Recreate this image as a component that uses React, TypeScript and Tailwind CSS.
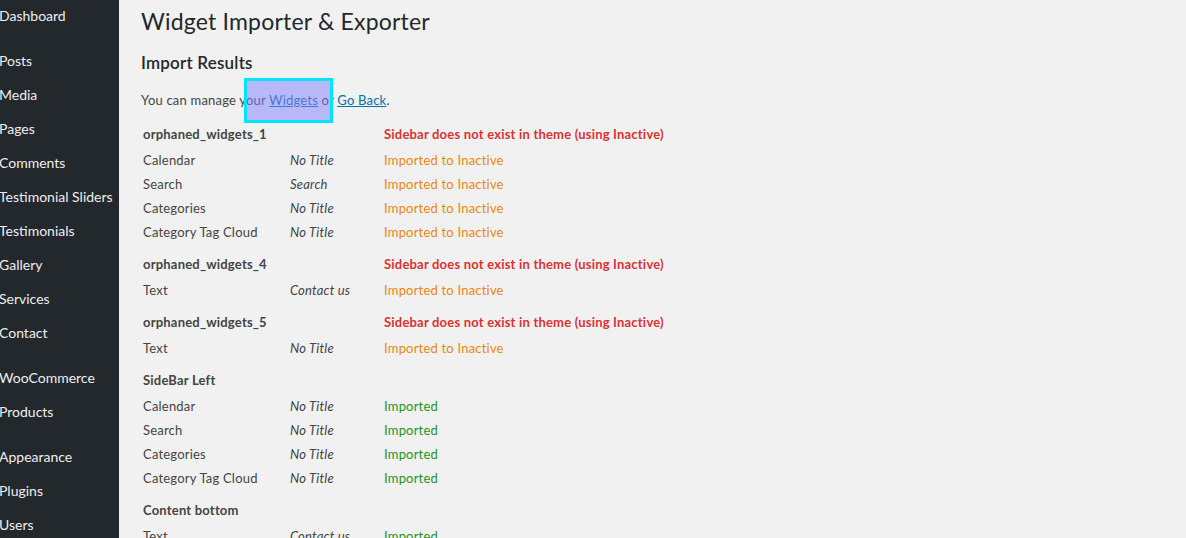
import React from 'react'

type Row = { name: string; title?: string; status: string; kind: 'error' | 'warn' | 'ok' }
type Group = { sidebar: string; message?: string; rows: Row[] }

const menu: (string | null)[] = [
  'Dashboard',
  null,
  'Posts',
  'Media',
  'Pages',
  'Comments',
  'Testimonial Sliders',
  'Testimonials',
  'Gallery',
  'Services',
  'Contact',
  null,
  'WooCommerce',
  'Products',
  null,
  'Appearance',
  'Plugins',
  'Users',
]

const groups: Group[] = [
  {
    sidebar: 'orphaned_widgets_1',
    message: 'Sidebar does not exist in theme (using Inactive)',
    rows: [
      { name: 'Calendar', title: 'No Title', status: 'Imported to Inactive', kind: 'warn' },
      { name: 'Search', title: 'Search', status: 'Imported to Inactive', kind: 'warn' },
      { name: 'Categories', title: 'No Title', status: 'Imported to Inactive', kind: 'warn' },
      { name: 'Category Tag Cloud', title: 'No Title', status: 'Imported to Inactive', kind: 'warn' },
    ],
  },
  {
    sidebar: 'orphaned_widgets_4',
    message: 'Sidebar does not exist in theme (using Inactive)',
    rows: [{ name: 'Text', title: 'Contact us', status: 'Imported to Inactive', kind: 'warn' }],
  },
  {
    sidebar: 'orphaned_widgets_5',
    message: 'Sidebar does not exist in theme (using Inactive)',
    rows: [{ name: 'Text', title: 'No Title', status: 'Imported to Inactive', kind: 'warn' }],
  },
  {
    sidebar: 'SideBar Left',
    rows: [
      { name: 'Calendar', title: 'No Title', status: 'Imported', kind: 'ok' },
      { name: 'Search', title: 'No Title', status: 'Imported', kind: 'ok' },
      { name: 'Categories', title: 'No Title', status: 'Imported', kind: 'ok' },
      { name: 'Category Tag Cloud', title: 'No Title', status: 'Imported', kind: 'ok' },
    ],
  },
  {
    sidebar: 'Content bottom',
    rows: [{ name: 'Text', title: 'Contact us', status: 'Imported', kind: 'ok' }],
  },
]

const statusColor = {
  error: 'text-[#dc3232]',
  warn: 'text-[#f0850f]',
  ok: 'text-[#1f961f]',
}

export default function App() {
  return (
    <div className="flex h-[538px] w-[1186px] overflow-hidden bg-[#f1f1f1] font-['Lato','Noto_Sans',sans-serif]">
      {/* Admin menu */}
      <nav className="w-[119px] shrink-0 bg-[#23282d] text-[14px] text-[#eeeeee]">
        <ul className="-mt-[2px] -ml-px">
          {menu.map((item, i) =>
            item === null ? (
              <li key={i} className="h-[11px]" />
            ) : (
              <li key={i} className="flex h-[34px] items-center whitespace-nowrap">
                {item}
              </li>
            )
          )}
        </ul>
      </nav>

      {/* Content */}
      <main className="relative flex-1 pl-[22px] text-[#444] tracking-[0.2px]">
        <h1 className="pt-[7px] text-[23px] leading-[29px] text-[#23282d]">Widget Importer &amp; Exporter</h1>
        <h2 className="mt-[15px] text-[17px] font-semibold leading-[24px] text-[#23282d]">Import Results</h2>
        <p className="mt-[15px] h-[20px] text-[13px] leading-[20px] text-[#444]">
          You can manage your{' '}
          <a href="#" className="text-[#0073aa] underline">
            Widgets
          </a>{' '}
          or{' '}
          <a href="#" className="text-[#0073aa] underline">
            Go Back
          </a>
          .
        </p>

        <div className="mt-[13px] pl-[2px] text-[13px]">
          {groups.map((g, gi) => (
            <div key={gi} className={gi === 0 ? '' : 'pt-2'}>
              <div className="mb-[2px] flex h-6 items-center font-bold text-[#444]">
                <span className="w-[241px]">{g.sidebar}</span>
                {g.message && <span className={statusColor.error}>{g.message}</span>}
              </div>
              {g.rows.map((r, ri) => (
                <div key={ri} className="flex h-6 items-center">
                  <span className="w-[147px]">{r.name}</span>
                  <span className="w-[94px] italic">{r.title}</span>
                  <span className={statusColor[r.kind]}>{r.status}</span>
                </div>
              ))}
            </div>
          ))}
        </div>

        {/* selection highlight over the links */}
        <div className="absolute left-[125px] top-[78px] h-[45px] w-[89px] border-[3px] border-[#00e5ff] bg-[#7f7fff]/50" />
      </main>
    </div>
  )
}
